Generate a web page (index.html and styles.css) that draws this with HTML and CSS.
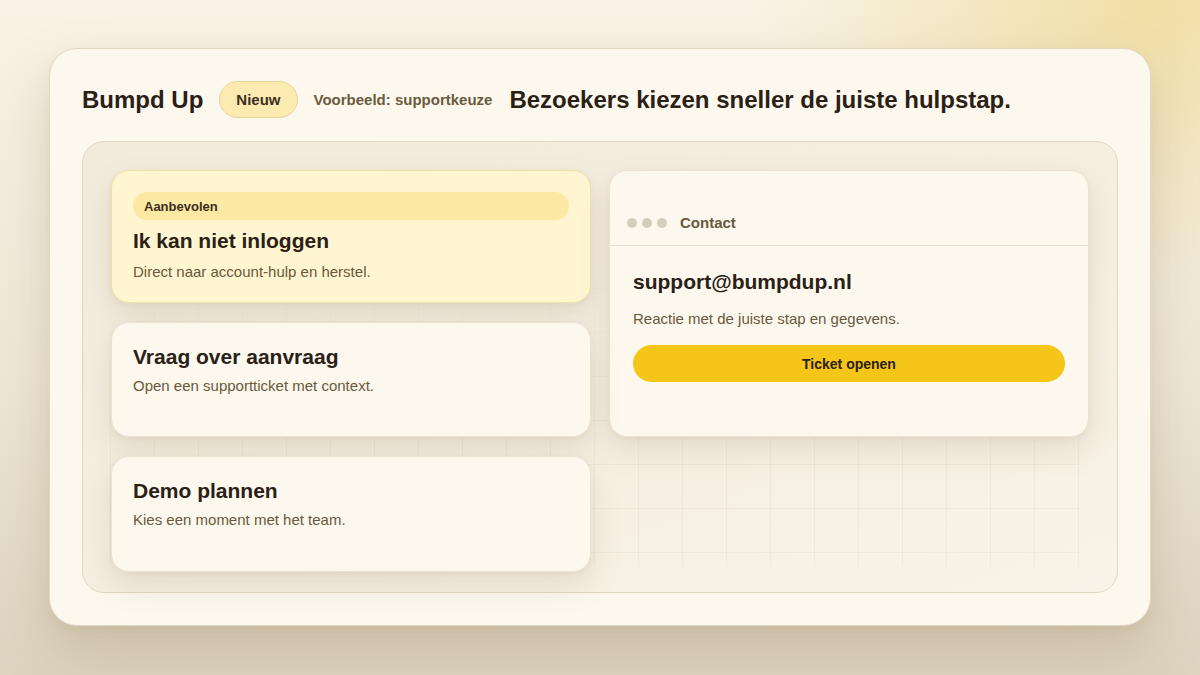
FILE: index.html
```html
<!DOCTYPE html>
<html lang="nl">
<head>
<meta charset="utf-8">
<title>Bumpd Up — supportkeuze</title>
<link rel="stylesheet" href="styles.css">
</head>
<body>
<div class="stage">
  <main class="frame">
    <header class="head">
      <span class="brand">Bumpd Up</span>
      <span class="pill">Nieuw</span>
      <span class="eyebrow">Voorbeeld: supportkeuze</span>
      <h1 class="headline">Bezoekers kiezen sneller de juiste hulpstap.</h1>
    </header>
    <section class="panel">
      <div class="grid">
        <article class="card card-featured">
          <span class="badge">Aanbevolen</span>
          <h2 class="card-title">Ik kan niet inloggen</h2>
          <p class="card-text">Direct naar account-hulp en herstel.</p>
        </article>
        <aside class="card contact">
          <div class="contact-bar">
            <span class="dots"><i></i><i></i><i></i></span>
            <span class="contact-label">Contact</span>
          </div>
          <div class="contact-body">
            <h2 class="card-title">support@bumpdup.nl</h2>
            <p class="card-text">Reactie met de juiste stap en gegevens.</p>
            <button class="cta" type="button">Ticket openen</button>
          </div>
        </aside>
        <article class="card">
          <h2 class="card-title">Vraag over aanvraag</h2>
          <p class="card-text">Open een supportticket met context.</p>
        </article>
        <article class="card">
          <h2 class="card-title">Demo plannen</h2>
          <p class="card-text">Kies een moment met het team.</p>
        </article>
      </div>
    </section>
  </main>
</div>
</body>
</html>
```

FILE: styles.css
```css
* { box-sizing: border-box; }
html, body { margin: 0; padding: 0; }
body {
  width: 1200px;
  height: 675px;
  overflow: hidden;
  font-family: "Liberation Sans", Arial, sans-serif;
  color: #2a2015;
  background:
    radial-gradient(ellipse 560px 400px at 1150px 10px, rgba(240, 218, 150, 0.8), rgba(240, 218, 150, 0) 70%),
    linear-gradient(180deg, #f8f3e6 0%, #efe7d6 55%, #ddd3bf 100%);
}
.stage {
  padding: 48px 49px 0 49px;
}
.frame {
  width: 1102px;
  height: 578px;
  border: 1px solid #e2d8c4;
  border-radius: 28px;
  background: #fcf8ee;
  padding: 32px 32px 32px 32px;
  display: flex;
  flex-direction: column;
  gap: 23px;
  box-shadow: 0 26px 54px rgba(140, 120, 80, 0.26), 0 4px 10px rgba(140, 120, 80, 0.08);
}
.head {
  display: flex;
  align-items: center;
  height: 37px;
  flex: none;
}
.brand {
  font-size: 24px;
  font-weight: 700;
  margin-right: 16px;
}
.pill {
  height: 37px;
  padding: 0 16px;
  border-radius: 999px;
  background: #fcebb0;
  border: 1px solid #e6d49a;
  font-size: 15px;
  font-weight: 700;
  color: #3a2e1e;
  display: inline-flex;
  align-items: center;
  margin-right: 16px;
}
.eyebrow {
  font-size: 15px;
  font-weight: 700;
  color: #6c5a3e;
  margin-right: 17px;
}
.headline {
  margin: 0;
  font-size: 24px;
  font-weight: 700;
  color: #2a2015;
}
.panel {
  flex: 1;
  position: relative;
  border: 1px solid #e0d7c3;
  border-radius: 22px;
  background: linear-gradient(160deg, #f2ebdc 0%, #f5efe2 55%, #f8f3e8 100%);
  padding: 28px 27px 19px 28px;
}
.panel::before {
  content: "";
  position: absolute;
  top: 0;
  left: 27px;
  right: 38px;
  bottom: 26px;
  background-image:
    linear-gradient(rgba(205, 192, 168, 0.3) 1px, transparent 1px),
    linear-gradient(90deg, rgba(205, 192, 168, 0.3) 1px, transparent 1px);
  background-size: 44px 44px;
  background-position: 0 14px, 0 0;
  -webkit-mask-image: linear-gradient(180deg, rgba(0,0,0,0.05) 0%, rgba(0,0,0,0.25) 50%, rgba(0,0,0,0.6) 80%, rgba(0,0,0,0.5) 100%);
  mask-image: linear-gradient(180deg, rgba(0,0,0,0.05) 0%, rgba(0,0,0,0.25) 50%, rgba(0,0,0,0.6) 80%, rgba(0,0,0,0.5) 100%);
  pointer-events: none;
}
.grid {
  position: relative;
  display: grid;
  grid-template-columns: 480px 480px;
  grid-template-rows: 133px 115px 116px;
  column-gap: 18px;
  row-gap: 19px;
}
.card {
  background: #fcf8ee;
  border: 1px solid #ebe3d2;
  border-radius: 18px;
  padding: 21px 21px;
  box-shadow: 0 14px 30px rgba(130, 110, 70, 0.15), 0 2px 6px rgba(130, 110, 70, 0.07);
}
.card-featured {
  background: #fff5d0;
  border-color: #f0e1a6;
}
.badge {
  display: flex;
  align-items: center;
  height: 28px;
  border-radius: 999px;
  background: #fde9a3;
  padding: 0 11px;
  font-size: 13px;
  font-weight: 700;
  color: #3a2e1e;
  margin-bottom: 8px;
}
.card-title {
  margin: 0;
  font-size: 21px;
  line-height: 25px;
  font-weight: 700;
  color: #2a2015;
}
.card-text {
  margin: 8px 0 0 0;
  font-size: 15px;
  line-height: 18px;
  color: #6a583c;
}
.card-featured .card-text {
  margin-top: 10px;
}
.contact {
  grid-column: 2;
  grid-row: 1 / span 2;
  padding: 0;
  display: flex;
  flex-direction: column;
}
.contact-bar {
  height: 75px;
  border-bottom: 1px solid #e7dfcf;
  display: flex;
  align-items: flex-end;
  padding: 0 22px 12px 17px;
  gap: 13px;
}
.dots {
  display: flex;
  gap: 5px;
  height: 20px;
  align-items: center;
}
.dots i {
  display: block;
  width: 10px;
  height: 10px;
  border-radius: 50%;
  background: #d5cdbd;
}
.contact-label {
  font-size: 15px;
  line-height: 20px;
  font-weight: 700;
  color: #6a583c;
}
.contact-body {
  padding: 23px 23px 0 23px;
}
.contact-body .card-text {
  margin-top: 16px;
}
.cta {
  display: block;
  width: 100%;
  height: 37px;
  margin-top: 17px;
  border: 0;
  border-radius: 999px;
  background: #f5c518;
  font-family: "Liberation Sans", Arial, sans-serif;
  font-size: 14px;
  font-weight: 700;
  color: #2a2015;
}
```
